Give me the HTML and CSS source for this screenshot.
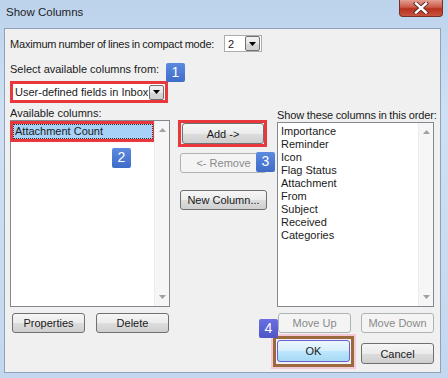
FILE: index.html
```html
<!DOCTYPE html>
<html>
<head>
<meta charset="utf-8">
<link rel="stylesheet" href="styles.css">
</head>
<body>
<div class="window">
  <div class="titlebar">
    <span class="title">Show Columns</span>
    <div class="close">
      <svg width="16" height="12" viewBox="0 0 16 12"><path d="M3 1.5 L13 10.5 M13 1.5 L3 10.5" stroke="#5a2a26" stroke-width="4.2" stroke-linecap="square"/><path d="M3 1.5 L13 10.5 M13 1.5 L3 10.5" stroke="#ffffff" stroke-width="2.4" stroke-linecap="square"/></svg>
    </div>
  </div>
  <div class="client">
    <div class="row-compact">
      <span class="compact-label">Maximum number of lines in compact mode:</span>
      <div class="combo combo-small">
        <span class="combo-text">2</span>
        <span class="drop"><svg width="7" height="4" viewBox="0 0 7 4"><path d="M0 0 H7 L3.5 4 Z" fill="#000"/></svg></span>
      </div>
    </div>
    <div class="lbl-select">Select available columns from:</div>
    <div class="combo combo-wide">
      <span class="combo-text">User-defined fields in Inbox</span>
      <span class="drop"><svg width="7" height="4" viewBox="0 0 7 4"><path d="M0 0 H7 L3.5 4 Z" fill="#000"/></svg></span>
    </div>

    <div class="main">
      <div class="col col-left">
        <div class="lbl">Available columns:</div>
        <div class="listbox listbox-left">
          <div class="items">
            <div class="item sel">Attachment Count</div>
          </div>
          <div class="vscroll">
            <svg width="7" height="4" viewBox="0 0 7 4"><path d="M0 4 H7 L3.5 0 Z" fill="#a0a0a0"/></svg>
            <svg width="7" height="4" viewBox="0 0 7 4"><path d="M0 0 H7 L3.5 4 Z" fill="#a0a0a0"/></svg>
          </div>
        </div>
        <div class="btnrow">
          <div class="btn">Properties</div>
          <div class="btn">Delete</div>
        </div>
      </div>

      <div class="col col-mid">
        <div class="hl-add"><div class="btn btn-mid">Add -&gt;</div></div>
        <div class="btn btn-mid disabled remove">&lt;- Remove</div>
        <div class="btn btn-mid newcol">New Column...</div>
      </div>

      <div class="col col-right">
        <div class="lbl">Show these columns in this order:</div>
        <div class="listbox listbox-right">
          <div class="items">
            <div class="item">Importance</div>
            <div class="item">Reminder</div>
            <div class="item">Icon</div>
            <div class="item">Flag Status</div>
            <div class="item">Attachment</div>
            <div class="item">From</div>
            <div class="item">Subject</div>
            <div class="item">Received</div>
            <div class="item">Categories</div>
          </div>
          <div class="vscroll">
            <svg width="7" height="4" viewBox="0 0 7 4"><path d="M0 4 H7 L3.5 0 Z" fill="#a0a0a0"/></svg>
            <svg width="7" height="4" viewBox="0 0 7 4"><path d="M0 0 H7 L3.5 4 Z" fill="#a0a0a0"/></svg>
          </div>
        </div>
        <div class="btnrow">
          <div class="btn disabled">Move Up</div>
          <div class="btn disabled">Move Down</div>
        </div>
        <div class="btnrow okrow">
          <div class="ok-wrap"><div class="btn ok">OK</div></div>
          <div class="btn cancel">Cancel</div>
        </div>
      </div>
    </div>

    <span class="badge b1">1</span>
    <span class="badge b2">2</span>
    <span class="badge b3">3</span>
    <span class="badge b4">4</span>
  </div>
</div>
</body>
</html>
```

FILE: styles.css
```css
* { box-sizing: border-box; }
html, body { margin: 0; padding: 0; }
body {
  width: 448px;
  height: 378px;
  overflow: hidden;
  font-family: "Liberation Sans", Arial, sans-serif;
  font-size: 11px;
  color: #1a1a1a;
}
.window {
  width: 448px;
  height: 378px;
  background: linear-gradient(180deg, #bcd3ec 0%, #cfe0f3 30%, #c3d7ee 100%);
  position: relative;
}
.titlebar {
  height: 28px;
  position: relative;
  padding: 4px 0 0 6px;
}
.title {
  font-size: 11.5px;
  color: #1e1e1e;
  line-height: 16px;
}
.close {
  position: absolute;
  top: 0;
  left: 399px;
  width: 44px;
  height: 17px;
  border: 1px solid #7a2d26;
  border-top: none;
  border-radius: 0 0 4px 4px;
  background: linear-gradient(180deg, #e3a093 0%, #cc5a47 45%, #b8301e 55%, #c8553e 100%);
  display: flex;
  align-items: center;
  justify-content: center;
}
.client {
  position: relative;
  margin-left: 4px;
  width: 437px;
  height: 345px;
  border: 1px solid #8da2bb;
  background: #f0f0f0;
  padding: 6px 0 0 5px;
}
.row-compact {
  display: flex;
  align-items: center;
  height: 17px;
}
.compact-label {
  width: 214px;
  white-space: nowrap;
  letter-spacing: -0.2px;
  word-spacing: -0.6px;
}
.combo {
  display: flex;
  align-items: center;
  background: #fff;
  border: 1px solid #abadb3;
  position: relative;
}
.combo-small {
  width: 38px;
  height: 17px;
  padding: 0 1px 0 3px;
}
.combo-text { flex: 1; white-space: nowrap; }
.drop {
  width: 15px;
  height: 15px;
  border: 1px solid #707070;
  border-radius: 2px;
  background: linear-gradient(180deg, #f2f2f2 0%, #e6e6e6 50%, #d6d6d6 51%, #cfcfcf 100%);
  display: flex;
  align-items: center;
  justify-content: center;
}
.lbl-select {
  margin-top: 10px;
  height: 14px;
  line-height: 14px;
}
.combo-wide {
  margin-top: 5px;
  width: 158px;
  height: 22px;
  border: 3px solid #e8383d;
  padding: 0 1px 0 2px;
}
.main {
  display: flex;
  margin-top: 3px;
}
.col { display: flex; flex-direction: column; }
.col-left { width: 160px; }
.col-mid { width: 90px; margin-left: 10px; padding-top: 14px; }
.col-right { width: 157px; margin-left: 7px; padding-top: 2px; }
.lbl {
  height: 14px;
  line-height: 14px;
  white-space: nowrap;
}
.col-right .lbl { letter-spacing: -0.1px; word-spacing: -0.4px; }
.listbox {
  background: #fff;
  border: 1px solid #828790;
  display: flex;
}
.listbox-left { height: 187px; }
.listbox-right { height: 185px; }
.items {
  flex: 1;
  padding: 2px 1px 0 2px;
}
.item {
  height: 13px;
  line-height: 13px;
  padding-left: 1px;
  white-space: nowrap;
}
.item.sel {
  background: #a7d1f7;
  border: 1px dotted #333;
  height: 15px;
  line-height: 13px;
  outline: 3px solid #e8383d;
  outline-offset: 0px;
  margin-top: 1px;
}
.vscroll {
  width: 15px;
  background: #f6f6f6;
  border-left: 1px solid #ececec;
  display: flex;
  flex-direction: column;
  justify-content: space-between;
  align-items: center;
  padding: 7px 0 7px;
}
.btnrow {
  display: flex;
  justify-content: space-between;
  margin-top: 6px;
  padding: 0 1px 0 2px;
}
.col-right .btnrow { padding: 0 0 0 1px; }
.btn {
  width: 73px;
  height: 20px;
  border: 1px solid #707070;
  border-radius: 3px;
  background: linear-gradient(180deg, #f6f6f6 0%, #ebebeb 50%, #dddddd 51%, #cfcfcf 100%);
  display: flex;
  align-items: center;
  justify-content: center;
  white-space: nowrap;
  color: #1a1a1a;
}
.btn.disabled {
  border-color: #adb2b5;
  background: #f4f4f4;
  color: #8a8a8a;
}
.btn-mid { width: 87px; }
.hl-add {
  border: 3px solid #e8383d;
  width: 89px;
  height: 27px;
  margin-left: -2px;
  padding: 0 0 0 1px;
  display: flex;
  align-items: center;
}
.hl-add .btn { width: 82px; height: 21px; }
.remove { margin-top: 6px; }
.newcol { margin-top: 17px; }
.okrow { margin-top: 7px; align-items: center; }
.ok-wrap {
  margin-left: -5px;
  margin-top: -4px;
  width: 81px;
  height: 31px;
  border: 3px solid #9a6a3c;
  box-shadow: 0 0 0 2px #f6c9d6;
  padding: 1px 0 0 1px;
}
.ok {
  width: 73px;
  height: 22px;
  border: 1px solid #6b5ed0;
  background: linear-gradient(180deg, #ecf7fd 0%, #d4eefb 50%, #bde6fd 51%, #a6d9f4 100%);
}
.cancel { width: 73px; height: 21px; }
.badge {
  position: absolute;
  width: 19px;
  height: 19px;
  background: linear-gradient(180deg, #5c8ae0 0%, #3f6cc8 100%);
  color: #fff;
  font-size: 14px;
  line-height: 19px;
  text-align: center;
  border-radius: 2px;
}
.b1 { left: 161px; top: 34px; }
.b2 { left: 107px; top: 119px; height: 20px; }
.b3 { left: 251px; top: 123px; height: 20px; }
.b4 { left: 254px; top: 290px; background: linear-gradient(180deg, #6a6ee0 0%, #4f56c8 100%); }
```
